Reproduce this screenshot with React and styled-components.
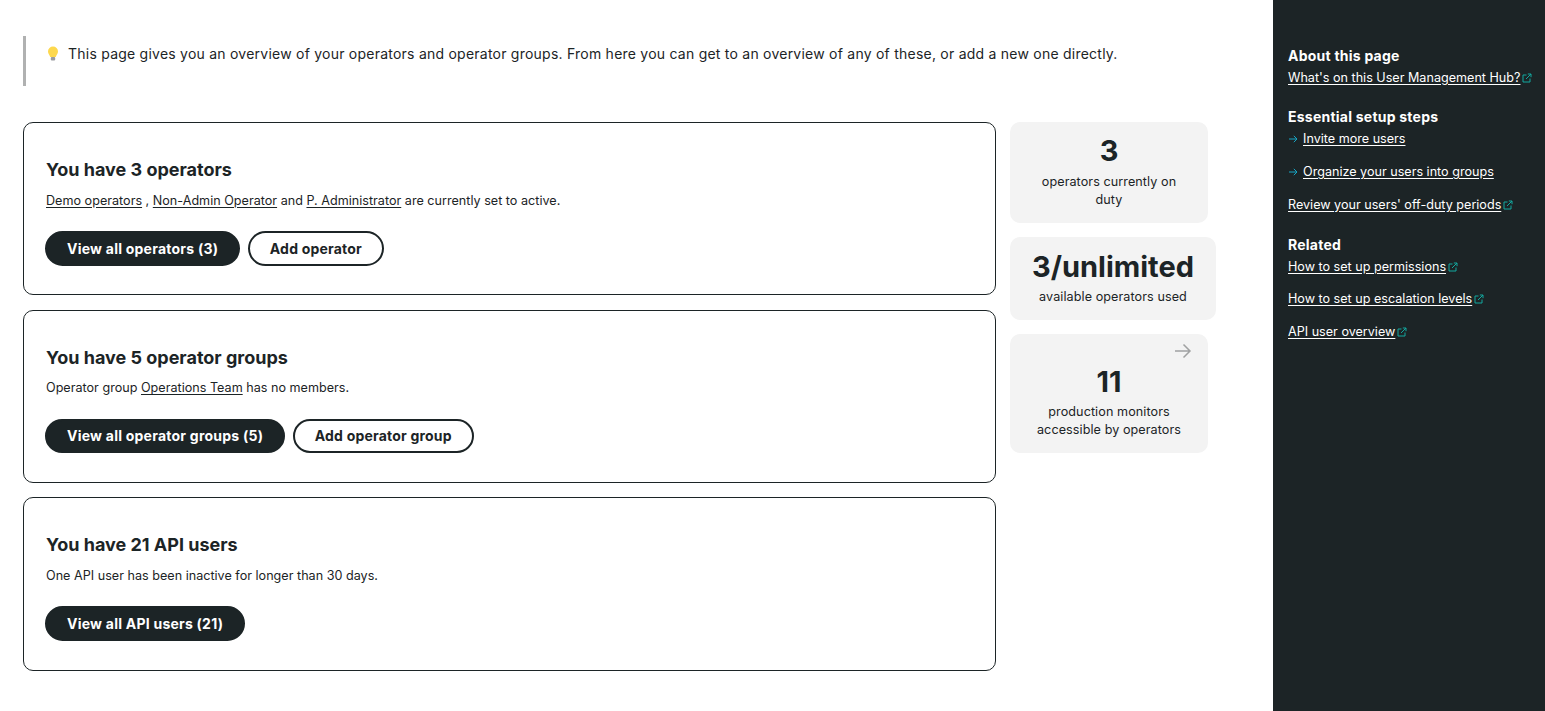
import React from 'react'
import styled, { createGlobalStyle } from 'styled-components'

const GlobalStyle = createGlobalStyle`
html, body {
  margin: 0;
  padding: 0;
  background: #fff;
  font-family: Inter, "Noto Sans", sans-serif;
  color: #1c2426;
}
* { box-sizing: border-box; }
`

const Page = styled.div`
  display: flex;
  width: 1545px;
  height: 711px;
  overflow: hidden;
`

const Main = styled.main`
  width: 1273px;
  padding: 36px 0 0 23px;
`

const Notice = styled.div`
  display: flex;
  align-items: flex-start;
  gap: 8px;
  height: 50px;
  border-left: 3px solid #b0b1b1;
  padding: 9px 0 0 20px;
  font-size: 14px;
  line-height: 17px;
  letter-spacing: 0.233px;
`

const Columns = styled.div`
  display: flex;
  align-items: flex-start;
  gap: 14px;
  margin-top: 36px;
`

const Cards = styled.div`
  display: flex;
  flex-direction: column;
  gap: 14.2px;
  width: 973px;
`

const Card = styled.section`
  height: 173.4px;
  border: 1px solid #1c2426;
  border-radius: 10px;
  padding: 36px 22px 0;
`

const CardTitle = styled.h2`
  margin: 0;
  font-size: 18px;
  line-height: 22px;
  font-weight: 700;
`

const CardText = styled.p`
  margin: 10.5px 0 0;
  font-size: 12.6px;
  line-height: 18px;
  letter-spacing: 0.01px;
`

const TextLink = styled.a`
  color: inherit;
  text-decoration: underline;
  text-underline-offset: 2px;
`

const Buttons = styled.div`
  display: flex;
  gap: 7.6px;
  margin: 21.5px 0 0 -1px;
`

const Button = styled.a`
  display: flex;
  align-items: center;
  height: 34.8px;
  padding: 0 20px;
  border: 2px solid #1c2426;
  border-radius: 18px;
  font-size: 14px;
  font-weight: 700;
  letter-spacing: ${p => (p.$primary ? '0.233px' : '0.2px')};
  background: ${p => (p.$primary ? '#1c2426' : '#fff')};
  color: ${p => (p.$primary ? '#fff' : '#1c2426')};
`

const Stats = styled.div`
  display: flex;
  flex-direction: column;
  align-items: flex-start;
  gap: 14px;
`

const Stat = styled.div`
  position: relative;
  display: flex;
  flex-direction: column;
  align-items: center;
  width: ${p => p.$width || 198}px;
  height: ${p => p.$height}px;
  padding: ${p => p.$top}px 20px 0;
  background: #f3f3f3;
  border-radius: 10px;
  text-align: center;
`

const StatValue = styled.div`
  font-size: 29px;
  line-height: 36px;
  font-weight: 700;
`

const StatLabel = styled.div`
  margin-top: ${p => p.$gap || 2.5}px;
  font-size: 12.6px;
  line-height: 18px;
  letter-spacing: 0.08px;
`

const StatArrow = styled.svg`
  position: absolute;
  top: 9px;
  right: 16px;
`

const Sidebar = styled.aside`
  width: 272px;
  height: 711px;
  padding: 47px 15px 0;
  background: #1c2426;
  color: #fff;
`

const SideGroup = styled.div`
  margin-bottom: 22.45px;
  &:first-child { margin-bottom: 21.8px; }
`

const SideTitle = styled.h3`
  margin: 0 0 4.5px;
  font-size: 14px;
  line-height: 17px;
  font-weight: 700;
  letter-spacing: 0.233px;
`

const SideItem = styled.div`
  display: flex;
  align-items: center;
  height: 18px;
  margin-bottom: 14.9px;
  font-size: 12.6px;
  line-height: 18px;
  white-space: nowrap;
  &:last-child { margin-bottom: 0; }
`

const SideIcon = styled.svg`
  flex: none;
  margin-left: ${p => p.$left || 0}px;
  margin-right: ${p => p.$right || 0}px;
`

const External = () => (
  <SideIcon $left={2} width="10" height="10" viewBox="0 0 10 10" fill="none" stroke="#12a89f" strokeWidth="1">
    <path d="M4.5 2H1v7h7V5.5" />
    <path d="M4 6l5-5M5.8 1H9v3.2" />
  </SideIcon>
)

const Arrow = () => (
  <SideIcon $right={5} width="10" height="10" viewBox="0 0 10 10" fill="none" stroke="#17a5c4" strokeWidth="1">
    <path d="M1 5h8M5.8 1.8L9 5 5.8 8.2" />
  </SideIcon>
)

const BulbIcon = styled.svg`
  flex: none;
  margin-top: 1px;
`

const Bulb = () => (
  <BulbIcon width="14" height="16" viewBox="0 0 14 16">
    <path d="M7 .5a5 5 0 0 0-5 5c0 2.2 1.6 3.4 2.2 5.5h5.6C10.4 8.9 12 7.700 12 5.500a5 5 0 0 0-5-5z" fill="#fdd84e" />
    <rect x="4.8" y="11" width="4.4" height="3.5" rx="1" fill="#9a9ba0" />
  </BulbIcon>
)

export default function App() {
  return (
    <Page>
      <GlobalStyle />
      <Main>
        <Notice>
          <Bulb />
          <span>This page gives you an overview of your operators and operator groups. From here you can get to an overview of any of these, or add a new one directly.</span>
        </Notice>
        <Columns>
          <Cards>
            <Card>
              <CardTitle>You have 3 operators</CardTitle>
              <CardText>
                <TextLink>Demo operators</TextLink> , <TextLink>Non-Admin Operator</TextLink> and <TextLink>P. Administrator</TextLink> are currently set to active.
              </CardText>
              <Buttons>
                <Button $primary>View all operators (3)</Button>
                <Button>Add operator</Button>
              </Buttons>
            </Card>
            <Card>
              <CardTitle>You have 5 operator groups</CardTitle>
              <CardText>
                Operator group <TextLink>Operations Team</TextLink> has no members.
              </CardText>
              <Buttons>
                <Button $primary>View all operator groups (5)</Button>
                <Button>Add operator group</Button>
              </Buttons>
            </Card>
            <Card>
              <CardTitle>You have 21 API users</CardTitle>
              <CardText>One API user has been inactive for longer than 30 days.</CardText>
              <Buttons>
                <Button $primary>View all API users (21)</Button>
              </Buttons>
            </Card>
          </Cards>
          <Stats>
            <Stat $height={101} $top={11}>
              <StatValue>3</StatValue>
              <StatLabel $gap={4}>operators currently on duty</StatLabel>
            </Stat>
            <Stat $width={206} $height={83} $top={12}>
              <StatValue>3/unlimited</StatValue>
              <StatLabel>available operators used</StatLabel>
            </Stat>
            <Stat $height={119} $top={30}>
              <StatArrow width="18" height="16" viewBox="0 0 18 16" fill="none" stroke="#a0a1a2" strokeWidth="1.5">
                <path d="M1 8h15M9.5 1.5L16 8l-6.5 6.5" />
              </StatArrow>
              <StatValue>11</StatValue>
              <StatLabel>production monitors accessible by operators</StatLabel>
            </Stat>
          </Stats>
        </Columns>
      </Main>
      <Sidebar>
        <SideGroup>
          <SideTitle>About this page</SideTitle>
          <SideItem><TextLink>What's on this User Management Hub?</TextLink><External /></SideItem>
        </SideGroup>
        <SideGroup>
          <SideTitle>Essential setup steps</SideTitle>
          <SideItem><Arrow /><TextLink>Invite more users</TextLink></SideItem>
          <SideItem><Arrow /><TextLink>Organize your users into groups</TextLink></SideItem>
          <SideItem><TextLink>Review your users' off-duty periods</TextLink><External /></SideItem>
        </SideGroup>
        <SideGroup>
          <SideTitle>Related</SideTitle>
          <SideItem><TextLink>How to set up permissions</TextLink><External /></SideItem>
          <SideItem><TextLink>How to set up escalation levels</TextLink><External /></SideItem>
          <SideItem><TextLink>API user overview</TextLink><External /></SideItem>
        </SideGroup>
      </Sidebar>
    </Page>
  )
}
